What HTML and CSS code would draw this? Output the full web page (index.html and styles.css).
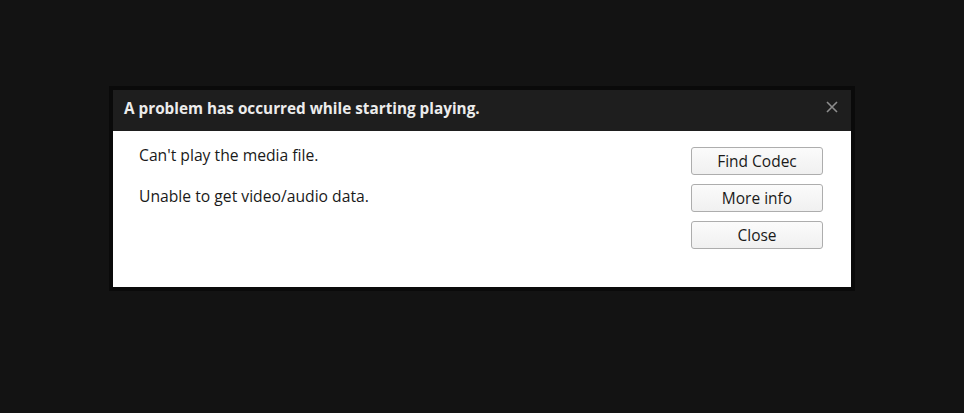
FILE: index.html
```html
<!DOCTYPE html>
<html lang="en">
<head>
    <meta charset="UTF-8">
    <title>Playback error</title>
    <link rel="stylesheet" href="styles.css">
</head>
<body>
    <div class="dialog">
        <div class="title-bar">
            <span class="title">A problem has occurred while starting playing.</span>
            <span class="close-x">
                <svg width="12" height="12" viewBox="0 0 12 12">
                    <path d="M1 1 L11 11 M11 1 L1 11" stroke="#8d8d8d" stroke-width="1.6" fill="none"/>
                </svg>
            </span>
        </div>
        <div class="dialog-body">
            <div class="messages">
                <p>Can't play the media file.</p>
                <p>Unable to get video/audio data.</p>
            </div>
            <div class="buttons">
                <button>Find Codec</button>
                <button>More info</button>
                <button>Close</button>
            </div>
        </div>
    </div>
</body>
</html>
```

FILE: styles.css
```css
body {
    margin: 0;
    height: 413px;
    background-color: #131313;
    font-family: "Open Sans", "Noto Sans", sans-serif;
    padding-top: 86px;
    box-sizing: border-box;
}
.dialog {
    width: 746px;
    margin: 0 auto;
    background-color: #0a0a0a;
    padding: 4px;
    box-sizing: border-box;
}
.title-bar {
    height: 41px;
    background-color: #1e1e1e;
    display: flex;
    align-items: center;
    justify-content: space-between;
    padding: 0 12px 0 11px;
}
.title {
    color: #ececec;
    font-weight: bold;
    font-size: 15.3px;
    margin-top: -6px;
}
.close-x {
    display: flex;
    margin-top: -8px;
    margin-right: 1px;
}
.dialog-body {
    background-color: #ffffff;
    height: 156px;
    display: flex;
    justify-content: space-between;
    padding: 14px 28px 0 26px;
    box-sizing: border-box;
}
.messages p {
    margin: 0 0 21px 0;
    font-size: 15.7px;
    color: #1a1a1a;
    line-height: 20px;
}
.buttons {
    display: flex;
    flex-direction: column;
    gap: 9px;
    padding-top: 2px;
}
.buttons button {
    width: 132px;
    height: 28px;
    font-family: "Open Sans", "Noto Sans", sans-serif;
    font-size: 15.5px;
    color: #1a1a1a;
    border: 1px solid #adadad;
    border-radius: 3px;
    background: linear-gradient(#fbfbfb, #f0f0f0);
    padding: 0;
}
```
